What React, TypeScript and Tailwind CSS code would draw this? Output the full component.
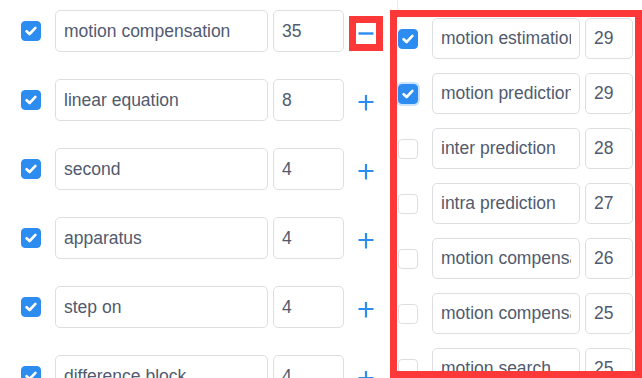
const leftRows = [
  { label: 'motion compensation', count: 35, active: true },
  { label: 'linear equation', count: 8 },
  { label: 'second', count: 4 },
  { label: 'apparatus', count: 4 },
  { label: 'step on', count: 4 },
  { label: 'difference block', count: 4 },
]

const rightRows = [
  { label: 'motion estimation', count: 29, checked: true },
  { label: 'motion prediction', count: 29, checked: true, focused: true },
  { label: 'inter prediction', count: 28 },
  { label: 'intra prediction', count: 27 },
  { label: 'motion compensation', count: 26 },
  { label: 'motion compensation', count: 25 },
  { label: 'motion search', count: 25 },
]

function CheckBox({ checked, focused }: { checked?: boolean; focused?: boolean }) {
  return (
    <span
      className={`flex h-5 w-5 shrink-0 items-center justify-center rounded-[4px] border ${
        checked ? 'border-[#2d8cf0] bg-[#2d8cf0]' : 'border-[#dcdee2] bg-white'
      } ${focused ? 'shadow-[0_0_0_2px_rgba(45,140,240,0.25)]' : ''}`}
    >
      {checked && (
        <svg className="h-3.5 w-3.5" viewBox="0 0 14 14" fill="none">
          <path d="M2.6 7.2L5.6 10L11.4 3.9" stroke="white" strokeWidth={2.6} strokeLinecap="round" strokeLinejoin="round" />
        </svg>
      )}
    </span>
  )
}

function Field({ value, width, height }: { value: string | number; width: string; height: string }) {
  return (
    <input
      readOnly
      value={value}
      className={`${width} ${height} rounded-[5px] border border-[#dcdee2] bg-white px-2 text-[17.5px] text-[#515a6e] outline-none`}
    />
  )
}

export default function App() {
  return (
    <div className="flex h-[378px] w-[642px] overflow-hidden bg-white font-['Liberation_Sans',Arial,sans-serif]">
      {/* selected keywords */}
      <div className="flex w-[390px] shrink-0 flex-col gap-[27px] pl-[21px] pt-[10px]">
        {leftRows.map((r) => (
          <div key={r.label} className="flex h-[42px] shrink-0 items-center">
            <CheckBox checked />
            <div className="ml-[14px] flex gap-[5px]">
              <Field value={r.label} width="w-[213px]" height="h-[42px]" />
              <Field value={r.count} width="w-[71px]" height="h-[42px]" />
            </div>
            <button
              className={`ml-[12px] mt-[5px] flex h-[21px] w-[20px] items-center justify-center bg-white ${
                r.active ? 'shadow-[0_0_0_7px_#fc3838]' : ''
              }`}
            >
              {r.active ? (
                <svg className="h-4 w-4" viewBox="0 0 16 16" fill="none">
                  <path d="M0.5 7.5H15.5" stroke="#2d8cf0" strokeWidth={2.4} />
                </svg>
              ) : (
                <svg className="h-4 w-4" viewBox="0 0 16 16" fill="none">
                  <path d="M0.5 7H15.5M8 0V15.5" stroke="#2d8cf0" strokeWidth={2.2} />
                </svg>
              )}
            </button>
          </div>
        ))}
      </div>

      {/* suggestions */}
      <div className="flex w-[252px] shrink-0 flex-col">
        <div className="ml-[7px] h-[10px] shrink-0 border-l border-[#e8eaec]" />
        <div className="h-[368px] shrink-0 overflow-hidden border-[7px] border-[#fc3838] bg-white">
          <div className="flex flex-col gap-[14px] pl-px pt-px">
            {rightRows.map((r, i) => (
              <div key={i} className="flex h-[41px] shrink-0 items-center">
                <CheckBox checked={r.checked} focused={r.focused} />
                <div className="ml-[14px] flex gap-[5px]">
                  <Field value={r.label} width="w-[148px]" height="h-[41px]" />
                  <Field value={r.count} width="w-[48px]" height="h-[41px]" />
                </div>
              </div>
            ))}
          </div>
        </div>
      </div>
    </div>
  )
}
